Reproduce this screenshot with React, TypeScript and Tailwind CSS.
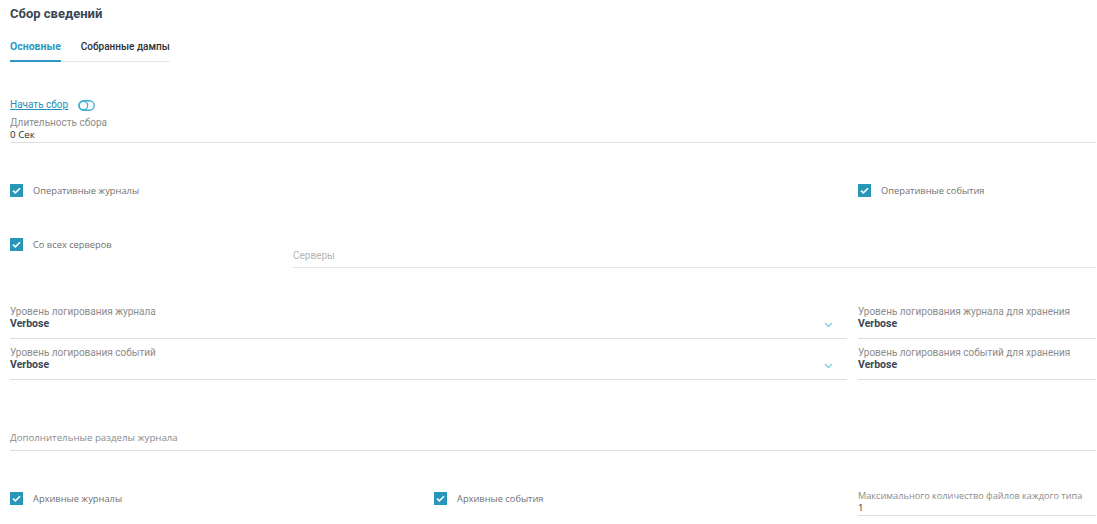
import React from "react";

const roboto = "font-['Roboto',sans-serif]";
const open = "font-['Open_Sans',sans-serif]";

function Check({ label, className = "" }: { label: string; className?: string }) {
  return (
    <div className={`flex items-center ${className}`}>
      <span className="flex size-[13px] items-center justify-center bg-[#2796b9]">
        <svg width="9" height="7" viewBox="0 0 9 7" fill="none">
          <path d="M1 3.6 3.4 5.8 8 1.2" stroke="white" strokeWidth="1.6" />
        </svg>
      </span>
      <span className={`ml-[10px] text-[9.3px] leading-[13px] text-[#707070] ${open}`}>{label}</span>
    </div>
  );
}

function Chevron() {
  return (
    <svg width="9" height="6" viewBox="0 0 9 6" fill="none" className="absolute right-[14px] bottom-[10px]">
      <path d="M1 1 4.5 4.5 8 1" stroke="#7fcbe0" strokeWidth="1.3" />
    </svg>
  );
}

function SelectField({ label, value, chevron }: { label: string; value: string; chevron?: boolean }) {
  return (
    <div className="relative border-b border-[#dedede] pb-[8px]">
      <div className={`text-[10px] leading-[12px] text-[#8c8c8c] ${roboto}`}>{label}</div>
      <div className={`text-[10.5px] leading-[12px] font-bold text-[#3b4654] ${roboto}`}>{value}</div>
      {chevron && <Chevron />}
    </div>
  );
}

export default function App() {
  return (
    <div className="min-h-[524px] w-full bg-white pl-[10px] pr-px pt-[6px]">
      <h1 className={`text-[13px] leading-4 font-bold text-[#3b4654] ${roboto}`}>Сбор сведений</h1>

      {/* Tabs */}
      <div className={`mt-[18px] inline-flex gap-5 border-b border-[#e6e6e6] leading-[14px] ${roboto}`}>
        <div className="-mb-px border-b-2 border-[#2b9ac2] pb-[6px] text-[10.5px] font-bold text-[#2b9ac2]">Основные</div>
        <div className="pb-[6px] text-[10px] font-medium text-[#2e2e2e]">Собранные дампы</div>
      </div>

      {/* Start */}
      <div className="mt-[36px] flex items-center gap-[10px]">
        <a className={`text-[10px] leading-[14px] text-[#2a8fb5] underline ${roboto}`}>Начать сбор</a>
        <svg width="17" height="11" viewBox="0 0 17 11" fill="none">
          <rect x="0.75" y="0.75" width="15.5" height="9.5" rx="4.75" stroke="#3fb0d2" strokeWidth="1.3" />
          <circle cx="5.5" cy="5.5" r="4.2" stroke="#3fb0d2" strokeWidth="1.3" fill="white" />
        </svg>
      </div>

      <div className="mt-[5px] border-b border-[#dedede] pb-[1px]">
        <div className={`text-[10px] leading-[12px] text-[#8c8c8c] ${roboto}`}>Длительность сбора</div>
        <div className={`text-[9.8px] leading-[12px] text-[#2e2e2e] ${open}`}>0 Сек</div>
      </div>

      {/* Operative */}
      <div className="mt-[41px] flex gap-[11px]">
        <div className="flex-1">
          <Check label="Оперативные журналы" />
        </div>
        <div className="w-[238px]">
          <Check label="Оперативные события" />
        </div>
      </div>

      <div className="mt-[41px] flex items-start gap-[10px]">
        <div className="w-[273px]">
          <Check label="Со всех серверов" />
        </div>
        <div className="mt-[12px] flex-1 border-b border-[#e6e6e6] pb-[5px]">
          <div className={`text-[10px] leading-[12px] text-[#b5b5b5] ${roboto}`}>Серверы</div>
        </div>
      </div>

      {/* Levels */}
      <div className="mt-[38px] flex gap-[11px]">
        <div className="flex-1">
          <SelectField label="Уровень логирования журнала" value="Verbose" chevron />
        </div>
        <div className="w-[238px]">
          <SelectField label="Уровень логирования журнала для хранения" value="Verbose" />
        </div>
      </div>
      <div className="mt-[8px] flex gap-[11px]">
        <div className="flex-1">
          <SelectField label="Уровень логирования событий" value="Verbose" chevron />
        </div>
        <div className="w-[238px]">
          <SelectField label="Уровень логирования событий для хранения" value="Verbose" />
        </div>
      </div>

      <div className="mt-[52px] border-b border-[#dedede] pb-[6px]">
        <div className={`text-[9.7px] leading-[12px] text-[#8c8c8c] ${open}`}>Дополнительные разделы журнала</div>
      </div>

      {/* Archive */}
      <div className="mt-[39px] flex items-start gap-[11px]">
        <div className="grid flex-1 grid-cols-2 gap-[11px] pt-[2px]">
          <Check label="Архивные журналы" />
          <Check label="Архивные события" />
        </div>
        <div className="w-[238px] border-b border-[#dedede] pb-[1px]">
          <div className={`whitespace-nowrap text-[9.2px] leading-[12px] text-[#8c8c8c] ${open}`}>Максимального количество файлов каждого типа</div>
          <div className={`text-[9.5px] leading-[12px] text-[#2e2e2e] ${open}`}>1</div>
        </div>
      </div>
    </div>
  );
}
